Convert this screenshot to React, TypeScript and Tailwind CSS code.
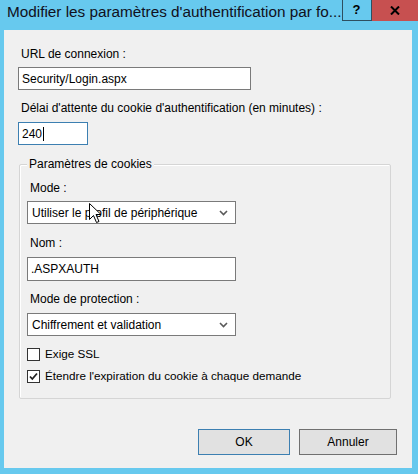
import React from "react";

const font = { fontFamily: '"Segoe UI", "Liberation Sans", Arial, sans-serif' };

function Chevron() {
  return (
    <svg width="9" height="6" viewBox="0 0 9 6" className="shrink-0">
      <path d="M1 1 L4.5 4.5 L8 1" stroke="#5a5a5a" strokeWidth="1.6" fill="none" />
    </svg>
  );
}

function Select({ value }: { value: string }) {
  return (
    <div className="flex items-center justify-between w-[209px] h-[23px] border border-[#7a7a7a] bg-white pl-[4px] pr-[7px] text-[12px] text-black">
      <span>{value}</span>
      <Chevron />
    </div>
  );
}

function Checkbox({ checked, label }: { checked?: boolean; label: string }) {
  return (
    <div className="flex items-center h-[14px] gap-[5px]">
      <div className="w-[13px] h-[13px] border border-[#333333] bg-white flex items-center justify-center">
        {checked && (
          <svg width="11" height="11" viewBox="0 0 11 11">
            <path d="M2 5.5 L4.3 8 L9 2.5" stroke="#222" strokeWidth="1.8" fill="none" />
          </svg>
        )}
      </div>
      <span className="text-[11.7px] text-black leading-none">{label}</span>
    </div>
  );
}

export default function App() {
  return (
    <div className="w-[418px] h-[474px] bg-[#67c9ee] flex flex-col relative overflow-hidden" style={font}>
      {/* title bar */}
      <div className="h-[30px] flex items-start shrink-0">
        <div className="pl-[7px] pt-[2px] text-[15.3px] leading-[20px] text-[#101020] whitespace-nowrap flex-1">
          Modifier les paramètres d'authentification par fo...
        </div>
        <div className="flex h-[21px]">
          <div className="w-[30px] h-[21px] border border-[#2e4f60] border-t-0 flex items-center justify-center text-[13px] font-bold text-black">?</div>
          <div className="w-[46px] h-[21px] bg-[#c75050] flex items-center justify-center mr-[5px]">
            <svg width="10" height="9" viewBox="0 0 10 9">
              <path d="M1 0.5 L9 8.5 M9 0.5 L1 8.5" stroke="#000" strokeWidth="2" />
            </svg>
          </div>
        </div>
      </div>
      {/* client */}
      <div className="ml-[4px] w-[408px] h-[438px] bg-[#f0f0f0] flex flex-col text-[12px] text-black">
        <div className="pl-[17px] mt-[16px] leading-[16px]">URL de connexion :</div>
        <div className="ml-[14px] mt-[5px] w-[233px] h-[23px] border border-[#7a7a7a] bg-white pl-[3px] flex items-center">
          Security/Login.aspx
        </div>
        <div className="pl-[17px] mt-[10px] leading-[16px]">Délai d'attente du cookie d'authentification (en minutes) :</div>
        <div className="ml-[14px] mt-[6px] w-[70px] h-[23px] border border-[#3c7fb1] bg-white pl-[3px] flex items-center">
          240<span className="inline-block w-[1px] h-[14px] bg-black ml-[1px]" />
        </div>
        {/* group box */}
        <div className="ml-[15px] mt-[19px] w-[372px] h-[235px] relative border border-[#d5d5d5] rounded-[2px] shadow-[inset_1px_1px_0_#ffffff]">
          <div className="absolute left-[7px] -top-[9px] bg-[#f0f0f0] px-[2px] leading-[16px]">Paramètres de cookies</div>
          <div className="flex flex-col pl-[7px] pt-[15px]">
            <div className="leading-[16px] pl-[3px]">Mode :</div>
            <div className="mt-[5px]"><Select value="Utiliser le profil de périphérique" /></div>
            <div className="leading-[16px] mt-[11px] pl-[3px]">Nom :</div>
            <div className="mt-[6px] w-[209px] h-[24px] border border-[#7a7a7a] bg-white pl-[3px] flex items-center">.ASPXAUTH</div>
            <div className="leading-[16px] mt-[10px] pl-[3px]">Mode de protection :</div>
            <div className="mt-[6px]"><Select value="Chiffrement et validation" /></div>
            <div className="mt-[11px]"><Checkbox label="Exige SSL" /></div>
            <div className="mt-[8px]"><Checkbox checked label="Étendre l'expiration du cookie à chaque demande" /></div>
          </div>
        </div>
        {/* buttons */}
        <div className="flex justify-end gap-[9px] mt-[30px] pr-[15px]">
          <div className="w-[92px] h-[26px] border border-[#3c7fb1] bg-[#e1e1e1] flex items-center justify-center">OK</div>
          <div className="w-[98px] h-[26px] border border-[#707070] bg-[#e1e1e1] flex items-center justify-center">Annuler</div>
        </div>
      </div>
      {/* mouse cursor */}
      <svg className="absolute left-[89px] top-[203px]" width="13" height="21" viewBox="0 0 13 21">
        <path d="M0.5 0.5 L0.5 16.5 L4.5 12.5 L7.5 19.5 L10 18.5 L7 11.5 L12 11.5 Z" fill="#ffffff" stroke="#000" strokeWidth="1" strokeLinejoin="miter" />
      </svg>
    </div>
  );
}
